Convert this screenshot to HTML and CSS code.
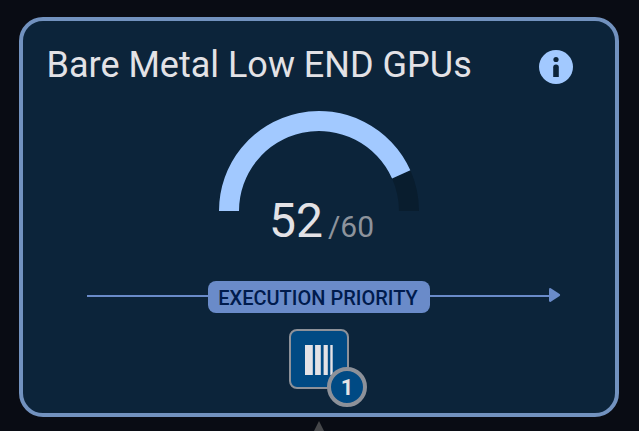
FILE: index.html
```html
<!DOCTYPE html>
<html lang="en">
<head>
<meta charset="utf-8">
<title>Bare Metal Low END GPUs</title>
<link rel="stylesheet" href="styles.css">
</head>
<body>
<main class="card">
  <header class="card-header">
    <h1 class="title">Bare Metal Low END GPUs</h1>
    <svg class="info" viewBox="0 0 34 34" width="34" height="34">
      <circle class="info-disc" cx="17" cy="17" r="17"/>
      <circle class="info-mark" cx="17" cy="9.5" r="2.6"/>
      <path class="info-mark" d="M14.2 27V17.2a2.8 2.8 0 0 1 5.6 0V27z"/>
    </svg>
  </header>
  <section class="gauge">
    <svg class="gauge-arc" viewBox="0 0 200 100" width="200" height="100">
      <path class="gauge-track" d="M191.35 59.33A100 100 0 0 1 200 100H180A80 80 0 0 0 173.08 67.46z"/>
      <path class="gauge-value" d="M0 100A100 100 0 0 1 191.35 59.33L173.08 67.46A80 80 0 0 0 20 100z"/>
    </svg>
    <p class="count"><span class="used">52</span><span class="total">/60</span></p>
  </section>
  <section class="priority">
    <span class="line"></span>
    <span class="pill">EXECUTION PRIORITY</span>
    <span class="line"></span>
    <svg class="arrow" viewBox="0 0 12 14" width="12" height="14"><path d="M0 1.4Q.1-.4 1.8.3L10.6 6Q11.7 7 10.6 8L1.8 13.7Q.1 14.4 0 12.6z"/></svg>
  </section>
  <div class="queue">
    <svg viewBox="0 0 28 30" width="28" height="30"><path d="M0 0h7.8v30H0zM10.1 0h5.7v30h-5.7zM18.6 0h4.2v30h-4.2zM25.3 0h2.4v30h-2.4z"/></svg>
    <span class="badge">1</span>
  </div>
</main>
<svg class="pointer" viewBox="0 0 14 14" width="14" height="14"><path d="M7 0l7 14H0z"/></svg>
</body>
</html>
```
FILE: styles.css
```css
* { box-sizing: border-box; }
body {
  margin: 0;
  height: 431px;
  padding: 17px 0 0 19px;
  overflow: hidden;
  background: #090c14;
  color: #e3e2e6;
  font-family: Roboto, "Liberation Sans", sans-serif;
}
svg { display: block; flex: none; }
.card {
  width: 600px;
  height: 400px;
  border: 4px solid #7292bf;
  border-radius: 24px;
  background: #0c243a;
  display: flex;
  flex-direction: column;
  align-items: center;
}
.card-header {
  width: 100%;
  height: 90px;
  padding: 23px 42px 0 23.5px;
  display: flex;
  justify-content: space-between;
}
.title {
  margin: 0;
  font-size: 36px;
  font-weight: 400;
  line-height: 42px;
  white-space: nowrap;
}
.info { margin-top: 5.5px; }
.info-disc { fill: #a2c9ff; }
.info-mark { fill: #0c243a; }
.gauge { height: 170px; }
.gauge-track { fill: #091d2e; }
.gauge-value { fill: #a2c9ff; }
.count {
  margin: -18px 0 0 5px;
  display: flex;
  justify-content: center;
  align-items: baseline;
  gap: 5px;
  line-height: 56px;
}
.used { font-size: 48px; }
.total { font-size: 30px; color: #8d939c; }
.priority {
  width: 474px;
  height: 32px;
  margin-left: 10px;
  display: flex;
  align-items: center;
}
.line {
  flex: 1;
  height: 2px;
  margin-top: -2px;
  background: #6a8bc9;
}
.line:first-child { flex: 0 0 121px; }
.pill {
  flex: none;
  width: 222px;
  height: 32px;
  padding-right: 2px;
  border-radius: 8px;
  background: #6a8bc9;
  color: #001b4d;
  font-size: 20px;
  font-weight: 500;
  line-height: 34px;
  text-align: center;
  white-space: nowrap;
}
.arrow { fill: #6a8bc9; margin-top: -4px; }
.queue {
  position: relative;
  width: 60px;
  height: 60px;
  margin-top: 16px;
  border: 2px solid #8d9199;
  border-radius: 8px;
  background: #004a84;
  padding: 14px;
}
.queue svg { fill: #e3e2e6; }
.badge {
  position: absolute;
  left: 36px;
  top: 36px;
  width: 40px;
  height: 40px;
  border: 4px solid #8d9199;
  border-radius: 50%;
  background: #004a84;
  font-size: 22px;
  font-weight: 700;
  line-height: 33px;
  text-align: center;
}
.pointer { margin: 4px 0 0 293px; fill: #46474a; }
```
